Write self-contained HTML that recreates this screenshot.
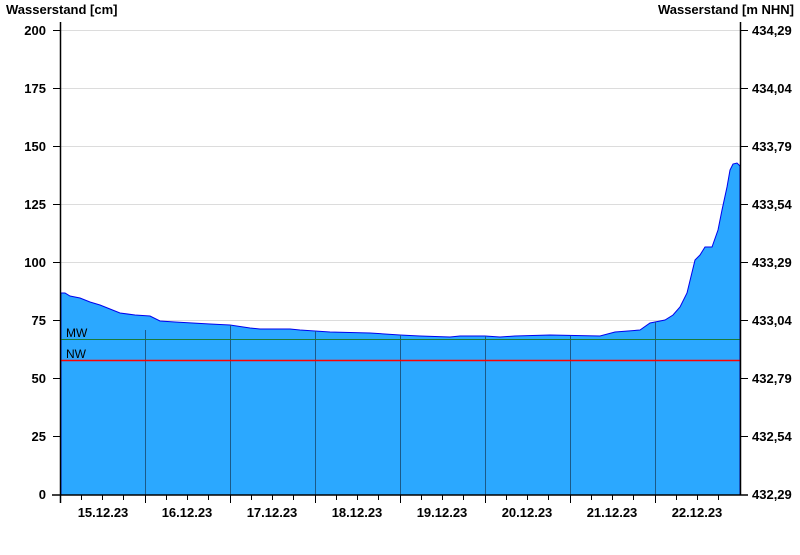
<!DOCTYPE html>
<html><head><meta charset="utf-8"><style>
body{margin:0;background:#fff;width:800px;height:550px;overflow:hidden}
text{font-family:"Liberation Sans",Arial,sans-serif;font-weight:bold;font-size:13px;fill:#000}
</style></head><body>
<svg width="800" height="550" xmlns="http://www.w3.org/2000/svg">
<g stroke="#dcdcdc" stroke-width="1">
<line x1="61" y1="30.5" x2="740" y2="30.5"/><line x1="61" y1="88.5" x2="740" y2="88.5"/>
<line x1="61" y1="146.5" x2="740" y2="146.5"/><line x1="61" y1="204.5" x2="740" y2="204.5"/>
<line x1="61" y1="262.5" x2="740" y2="262.5"/><line x1="61" y1="320.5" x2="740" y2="320.5"/>
</g>
<path d="M61,293 L65,293 L70,296 L80,298 L90,302 L100,305 L110,309 L120,313 L135,315 L150,316 L160,321 L175,322 L210,324 L230,325 L250,328 L260,329 L290,329 L300,330 L315,331 L330,332 L370,333 L400,335 L420,336 L450,337 L460,336 L485,336 L500,337 L515,336 L550,335 L600,336 L615,332 L640,330 L650,323 L655,322 L665,320 L673,315 L680,307 L687,293 L695,260 L700,255 L705,247 L712,247 L718,230 L722,210 L727,187 L730,170 L733,164 L737,163 L740,166 L740,495 L61,495 Z" fill="#2ba8ff" stroke="#0000ee" stroke-width="1"/>
<g stroke="#1a5a8a" stroke-width="1">
<line x1="145.5" y1="330" x2="145.5" y2="495"/><line x1="230.5" y1="325" x2="230.5" y2="495"/>
<line x1="315.5" y1="331" x2="315.5" y2="495"/><line x1="400.5" y1="335" x2="400.5" y2="495"/>
<line x1="485.5" y1="336" x2="485.5" y2="495"/><line x1="570.5" y1="336" x2="570.5" y2="495"/>
<line x1="655.5" y1="322" x2="655.5" y2="495"/>
</g>
<line x1="61" y1="339.5" x2="740" y2="339.5" stroke="#1a7a3a" stroke-width="1"/>
<line x1="61" y1="360.5" x2="740" y2="360.5" stroke="#ff0000" stroke-width="1.5"/>
<text x="66" y="337" style="font-weight:normal;font-size:12px" fill="#0a2040">MW</text>
<text x="66" y="358" style="font-weight:normal;font-size:12px" fill="#0a2040">NW</text>
<g stroke="#000" stroke-width="1.5">
<line x1="60.5" y1="22" x2="60.5" y2="503"/><line x1="740.5" y1="22" x2="740.5" y2="495"/>
<line x1="52" y1="495" x2="748" y2="495"/>
</g>
<g stroke="#000" stroke-width="1">
<path d="M53,30.5h7M53,88.5h7M53,146.5h7M53,204.5h7M53,262.5h7M53,320.5h7M53,378.5h7M53,436.5h7"/>
<path d="M741,30.5h7M741,88.5h7M741,146.5h7M741,204.5h7M741,262.5h7M741,320.5h7M741,378.5h7M741,436.5h7"/>
<path d="M145.5,495v8M230.5,495v8M315.5,495v8M400.5,495v8M485.5,495v8M570.5,495v8M655.5,495v8"/>
<path d="M81.5,495v5M102.5,495v5M123.5,495v5M166.5,495v5M187.5,495v5M208.5,495v5M251.5,495v5M272.5,495v5M293.5,495v5M336.5,495v5M357.5,495v5M378.5,495v5M421.5,495v5M442.5,495v5M463.5,495v5M506.5,495v5M527.5,495v5M548.5,495v5M591.5,495v5M612.5,495v5M633.5,495v5M676.5,495v5M697.5,495v5M718.5,495v5"/>
</g>
<text x="6" y="14">Wasserstand [cm]</text>
<text x="794" y="14" text-anchor="end">Wasserstand [m NHN]</text>
<g text-anchor="end">
<text x="46" y="35">200</text><text x="46" y="93">175</text><text x="46" y="151">150</text>
<text x="46" y="209">125</text><text x="46" y="267">100</text><text x="46" y="325">75</text>
<text x="46" y="383">50</text><text x="46" y="441">25</text><text x="46" y="499">0</text>
</g>
<g>
<text x="752" y="35">434,29</text><text x="752" y="93">434,04</text><text x="752" y="151">433,79</text>
<text x="752" y="209">433,54</text><text x="752" y="267">433,29</text><text x="752" y="325">433,04</text>
<text x="752" y="383">432,79</text><text x="752" y="441">432,54</text><text x="752" y="499">432,29</text>
</g>
<g text-anchor="middle">
<text x="103" y="517">15.12.23</text><text x="187" y="517">16.12.23</text><text x="272" y="517">17.12.23</text>
<text x="357" y="517">18.12.23</text><text x="442" y="517">19.12.23</text><text x="527" y="517">20.12.23</text>
<text x="612" y="517">21.12.23</text><text x="697" y="517">22.12.23</text>
</g>
</svg>
</body></html>
